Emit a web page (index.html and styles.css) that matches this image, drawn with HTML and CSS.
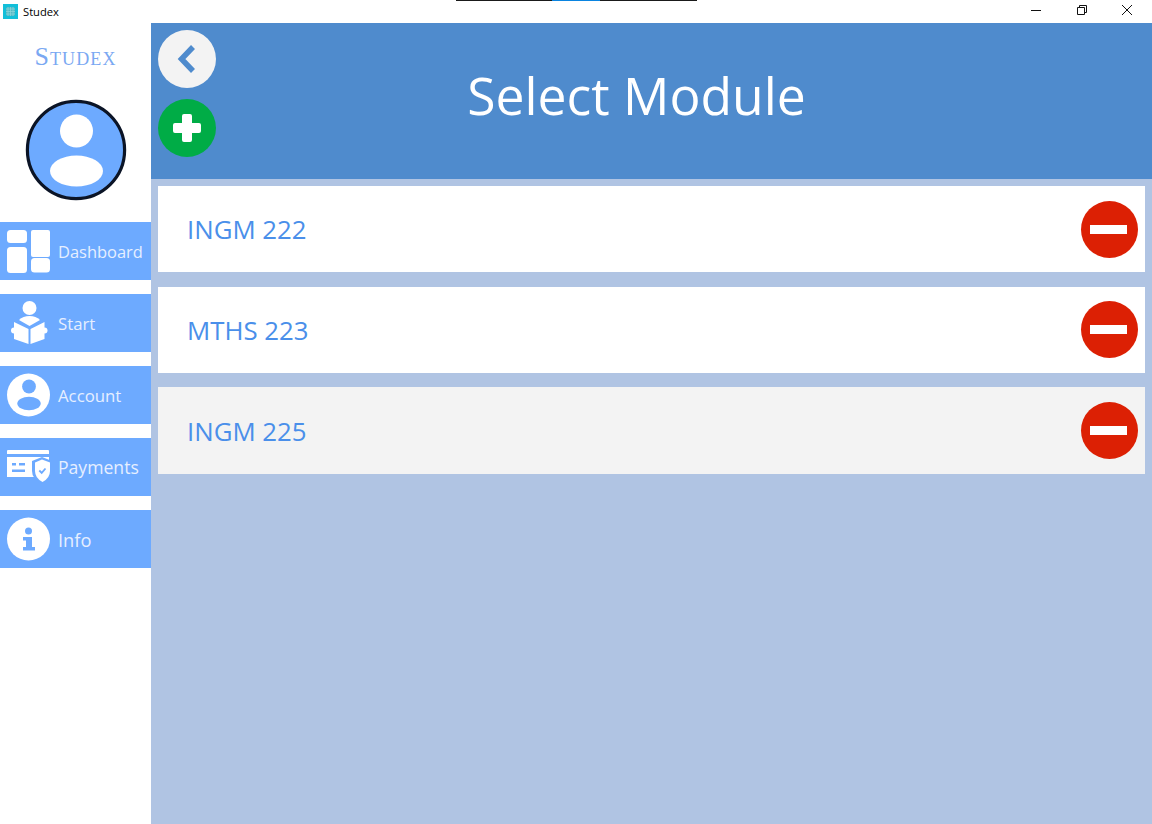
FILE: index.html
```html
<!DOCTYPE html>
<html lang="en">
<head>
  <meta charset="UTF-8">
  <meta name="viewport" content="width=device-width, initial-scale=1.0">
  <title>Studex - Select Module</title>
  <link rel="stylesheet" href="styles.css">
</head>
<body>
  <div class="title-bar">
    <div class="app-name">
      <svg class="app-icon" viewBox="0 0 15 15">
        <rect width="15" height="15" fill="#12bfd9"/>
        <rect x="3" y="3" width="9" height="9" rx="2" fill="#4fb9c4"/>
        <path d="M3 5h9M3 7.500h9M3 10h9M5 3v9M7.500 3v9M10 3v9" stroke="#8fd6dc" stroke-width="0.7"/>
      </svg>
      <span>Studex</span>
    </div>
    <div class="drag-strip"><span class="drag-strip-active"></span></div>
    <div class="window-controls">
      <span class="window-btn">
        <svg viewBox="0 0 12 12"><path d="M1 6.500h10" stroke="#111" fill="none"/></svg>
      </span>
      <span class="window-btn">
        <svg viewBox="0 0 12 12"><path d="M1.500 3.500h7v7h-7zM3.500 3.500v-2h7v7h-2" stroke="#111" fill="none"/></svg>
      </span>
      <span class="window-btn">
        <svg viewBox="0 0 12 12"><path d="M1 1l10 10M11 1l-10 10" stroke="#111" fill="none"/></svg>
      </span>
    </div>
  </div>

  <div class="app">
    <aside class="sidebar">
      <div class="logo">Studex</div>
      <svg class="avatar" viewBox="0 0 102 102">
        <circle cx="51" cy="51" r="48.600" fill="#6daaff" stroke="#0b1426" stroke-width="3.200"/>
        <circle cx="51.500" cy="32" r="16.500" fill="#fff"/>
        <ellipse cx="51.500" cy="72" rx="26.500" ry="15.500" fill="#fff"/>
      </svg>
      <nav class="nav">
        <a class="nav-item">
          <svg class="nav-icon" viewBox="0 0 44 44">
            <rect x="0" y="1" width="20" height="13" rx="3.500" fill="#fff"/>
            <rect x="0" y="18" width="20" height="26" rx="3.500" fill="#fff"/>
            <rect x="24" y="1" width="19" height="27" rx="2" fill="#fff"/>
            <rect x="24" y="29" width="19" height="14.500" rx="3.500" fill="#fff"/>
          </svg>
          <span class="label-dashboard">Dashboard</span>
        </a>
        <a class="nav-item">
          <svg class="nav-icon" viewBox="0 0 44 44">
            <circle cx="22.500" cy="7" r="7" fill="#fff"/>
            <path d="M12 19Q16 15 22.500 15Q29 15 33 19L22.500 25Z" fill="#fff"/>
            <path d="M7 21L21.500 28V43L7 38ZM23.500 28L37.500 21V38L23.500 43Z" fill="#fff"/>
            <circle cx="7" cy="29.500" r="3" fill="#fff"/>
            <circle cx="37.500" cy="29.500" r="3" fill="#fff"/>
          </svg>
          <span>Start</span>
        </a>
        <a class="nav-item">
          <svg class="nav-icon" viewBox="0 0 44 44">
            <circle cx="21.500" cy="22" r="21.500" fill="#fff"/>
            <circle cx="22" cy="13.500" r="6.900" fill="#6daaff"/>
            <ellipse cx="22" cy="30.500" rx="11.700" ry="6.700" fill="#6daaff"/>
          </svg>
          <span>Account</span>
        </a>
        <a class="nav-item">
          <svg class="nav-icon" viewBox="0 0 44 44">
            <path d="M1 5h40a1 1 0 0 1 1 1v3H0V6a1 1 0 0 1 1-1Z" fill="#fff"/>
            <rect x="0" y="12" width="42" height="20" fill="#fff"/>
            <rect x="5" y="18" width="4" height="2.500" fill="#6daaff"/>
            <rect x="12" y="18" width="6" height="2.500" fill="#6daaff"/>
            <rect x="5" y="24.500" width="13" height="2.500" fill="#6daaff"/>
            <path d="M35 12L45 16V26Q45 34 35 39Q25 34 25 26V16Z" fill="#6daaff"/>
            <path d="M35 14.500L43 17.500V26Q43 33 35.500 37Q28 33 28 26V17.500Z" fill="#fff"/>
            <path d="M32.300 25.500l2.400 2.400 3.800-4.400" stroke="#6daaff" stroke-width="1.800" fill="none"/>
          </svg>
          <span class="label-payments">Payments</span>
        </a>
        <a class="nav-item">
          <svg class="nav-icon" viewBox="0 0 44 44">
            <circle cx="21.500" cy="22" r="21.500" fill="#fff"/>
            <circle cx="21.500" cy="14" r="3.500" fill="#6daaff"/>
            <path d="M16 20h9v10h3v3.500H16V30h3v-6.500h-3Z" fill="#6daaff"/>
          </svg>
          <span class="label-info">Info</span>
        </a>
      </nav>
    </aside>

    <main class="main">
      <header class="header">
        <div class="header-actions">
          <button class="round-btn back-btn">
            <svg viewBox="0 0 58 58"><path d="M35 17L23.500 29L35 41" stroke="#4f8bcd" stroke-width="5.500" fill="none"/></svg>
          </button>
          <button class="round-btn add-btn">
            <svg viewBox="0 0 58 58"><path d="M26 15h6a2 2 0 0 1 2 2v7h7a2 2 0 0 1 2 2v6a2 2 0 0 1-2 2h-7v7a2 2 0 0 1-2 2h-6a2 2 0 0 1-2-2v-7h-7a2 2 0 0 1-2-2v-6a2 2 0 0 1 2-2h7v-7a2 2 0 0 1 2-2Z" fill="#fff"/></svg>
          </button>
        </div>
        <h1 class="page-title">Select Module</h1>
      </header>

      <section class="module-list">
        <div class="module-row">
          <span class="module-name">INGM 222</span>
          <button class="remove-btn"></button>
        </div>
        <div class="module-row">
          <span class="module-name">MTHS 223</span>
          <button class="remove-btn"></button>
        </div>
        <div class="module-row module-row-hover">
          <span class="module-name">INGM 225</span>
          <button class="remove-btn"></button>
        </div>
      </section>
    </main>
  </div>
</body>
</html>
```

FILE: styles.css
```css
* {
  box-sizing: border-box;
}
body {
  margin: 0;
  padding: 0;
  height: 824px;
  overflow: hidden;
  background: #fff;
  font-family: 'Open Sans', 'Noto Sans', sans-serif;
  display: flex;
  flex-direction: column;
}

/* window frame */
.title-bar {
  height: 23px;
  flex: none;
  display: flex;
  justify-content: space-between;
  align-items: center;
  position: relative;
  background: #fff;
}
.app-name {
  display: flex;
  align-items: center;
  gap: 5px;
  padding-left: 3px;
  font-size: 11.200px;
  color: #000;
}
.app-icon {
  width: 15px;
  height: 15px;
}
.drag-strip {
  position: absolute;
  top: 0;
  left: 456px;
  width: 241px;
  height: 1px;
  background: #1a1a1a;
}
.drag-strip-active {
  display: block;
  width: 48px;
  height: 1px;
  margin-left: 96px;
  background: #0a84e0;
}
.window-controls {
  display: flex;
  padding-right: 2px;
}
.window-btn {
  width: 45.500px;
  height: 23px;
  display: flex;
  align-items: center;
  justify-content: center;
}
.window-btn svg {
  width: 12px;
  height: 12px;
  margin-bottom: 3px;
}

/* layout */
.app {
  flex: 1;
  display: flex;
  min-height: 0;
}
.sidebar {
  width: 151px;
  flex: none;
  display: flex;
  flex-direction: column;
  align-items: center;
  background: #fff;
}
.logo {
  margin-top: 19px;
  height: 29px;
  line-height: 29px;
  font-family: 'Liberation Serif', serif;
  font-variant: small-caps;
  font-size: 26px;
  letter-spacing: 1.1px;
  color: #7aa8f2;
}
.avatar {
  width: 102px;
  height: 102px;
  margin-top: 28px;
}
.nav {
  width: 100%;
  margin-top: 21px;
  display: flex;
  flex-direction: column;
  gap: 14px;
}
.nav-item {
  height: 58px;
  display: flex;
  align-items: center;
  gap: 7px;
  padding-left: 7px;
  background: #6daaff;
  color: #e6efff;
  font-size: 16.800px;
}
.label-dashboard {
  font-size: 16.450px;
}
.label-payments {
  font-size: 17.600px;
}
.label-info {
  font-size: 18.300px;
}
.nav-icon {
  width: 44px;
  height: 44px;
  flex: none;
  overflow: visible;
}

/* main panel */
.main {
  flex: 1;
  display: flex;
  flex-direction: column;
  background: #b0c4e3;
}
.header {
  height: 156px;
  flex: none;
  display: flex;
  background: #4f8bcd;
  padding: 7px 0 0 7px;
}
.header-actions {
  display: flex;
  flex-direction: column;
  gap: 11px;
}
.round-btn {
  width: 58px;
  height: 58px;
  padding: 0;
  border: none;
  border-radius: 50%;
  cursor: pointer;
}
.round-btn svg {
  display: block;
  width: 58px;
  height: 58px;
}
.back-btn {
  background: #f3f3f3;
}
.add-btn {
  background: #00ac46;
}
.page-title {
  flex: 1;
  margin: 0;
  padding-right: 95px;
  padding-bottom: 20px;
  align-self: center;
  text-align: center;
  font-size: 51.600px;
  font-weight: 400;
  color: #fff;
}
.module-list {
  display: flex;
  flex-direction: column;
  gap: 14.300px;
  padding: 7px 7px 0;
}
.module-row {
  height: 86.400px;
  display: flex;
  align-items: center;
  justify-content: space-between;
  padding: 0 7px 0 29px;
  background: #fff;
}
.module-row-hover {
  background: #f3f3f3;
}
.module-name {
  font-size: 25.800px;
  color: #4a8fea;
}
.remove-btn {
  width: 57px;
  height: 57px;
  padding: 0;
  border: none;
  border-radius: 50%;
  background: #dc2004;
  position: relative;
  cursor: pointer;
}
.remove-btn::after {
  content: '';
  position: absolute;
  left: 9px;
  right: 11px;
  top: 24px;
  height: 9px;
  background: #fff;
}
```
